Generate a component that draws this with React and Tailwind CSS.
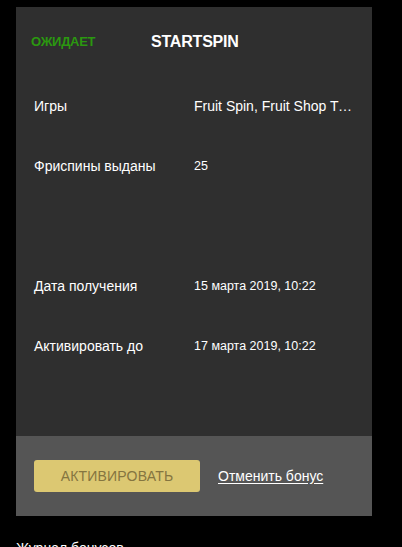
import React from 'react'

const rows = [
  { label: 'Игры', value: 'Fruit Spin, Fruit Shop Turbo, Fruit Party', big: true },
  { label: 'Фриспины выданы', value: '25' },
  { label: '', value: '' },
  { label: 'Дата получения', value: '15 марта 2019, 10:22' },
  { label: 'Активировать до', value: '17 марта 2019, 10:22' },
]

const App = () => {
  return (
    <div className="bg-black pt-[7px] font-['Liberation_Sans',sans-serif] overflow-hidden h-[547px]">
      <div className="ml-4 w-[356px]">
        {/* card body */}
        <div className="bg-[#2f2f2f] h-[429px]">
          <div className="h-[69px] flex items-center">
            <span className="ml-[15px] w-[120px] text-[13px] font-bold text-[#2b9810] tracking-[-0.3px]">ОЖИДАЕТ</span>
            <span className="text-[16px] font-bold text-white tracking-[-0.2px]">STARTSPIN</span>
          </div>
          {rows.map((row, i) => (
            <div key={i} className="h-[60px] flex items-center pl-[18px] pr-[16px]">
              <span className="w-[160px] shrink-0 text-[14px] text-white">{row.label}</span>
              <span className={`${row.big ? 'text-[14px]' : 'text-[12.5px]'} text-white truncate`}>{row.value}</span>
            </div>
          ))}
        </div>
        {/* footer */}
        <div className="bg-[#555555] h-[80px] flex items-center pl-[18px]">
          <button className="w-[166px] h-[32px] rounded-[3px] bg-[#dcc872] text-[#857540] text-[14px] tracking-[0.2px]">
            АКТИВИРОВАТЬ
          </button>
          <a href="#" className="ml-[18px] text-[14px] text-white underline underline-offset-2">Отменить бонус</a>
        </div>
      </div>
      <div className="ml-4 mt-[22px] text-[14px] text-white">Журнал бонусов →</div>
    </div>
  )
}

export default App
